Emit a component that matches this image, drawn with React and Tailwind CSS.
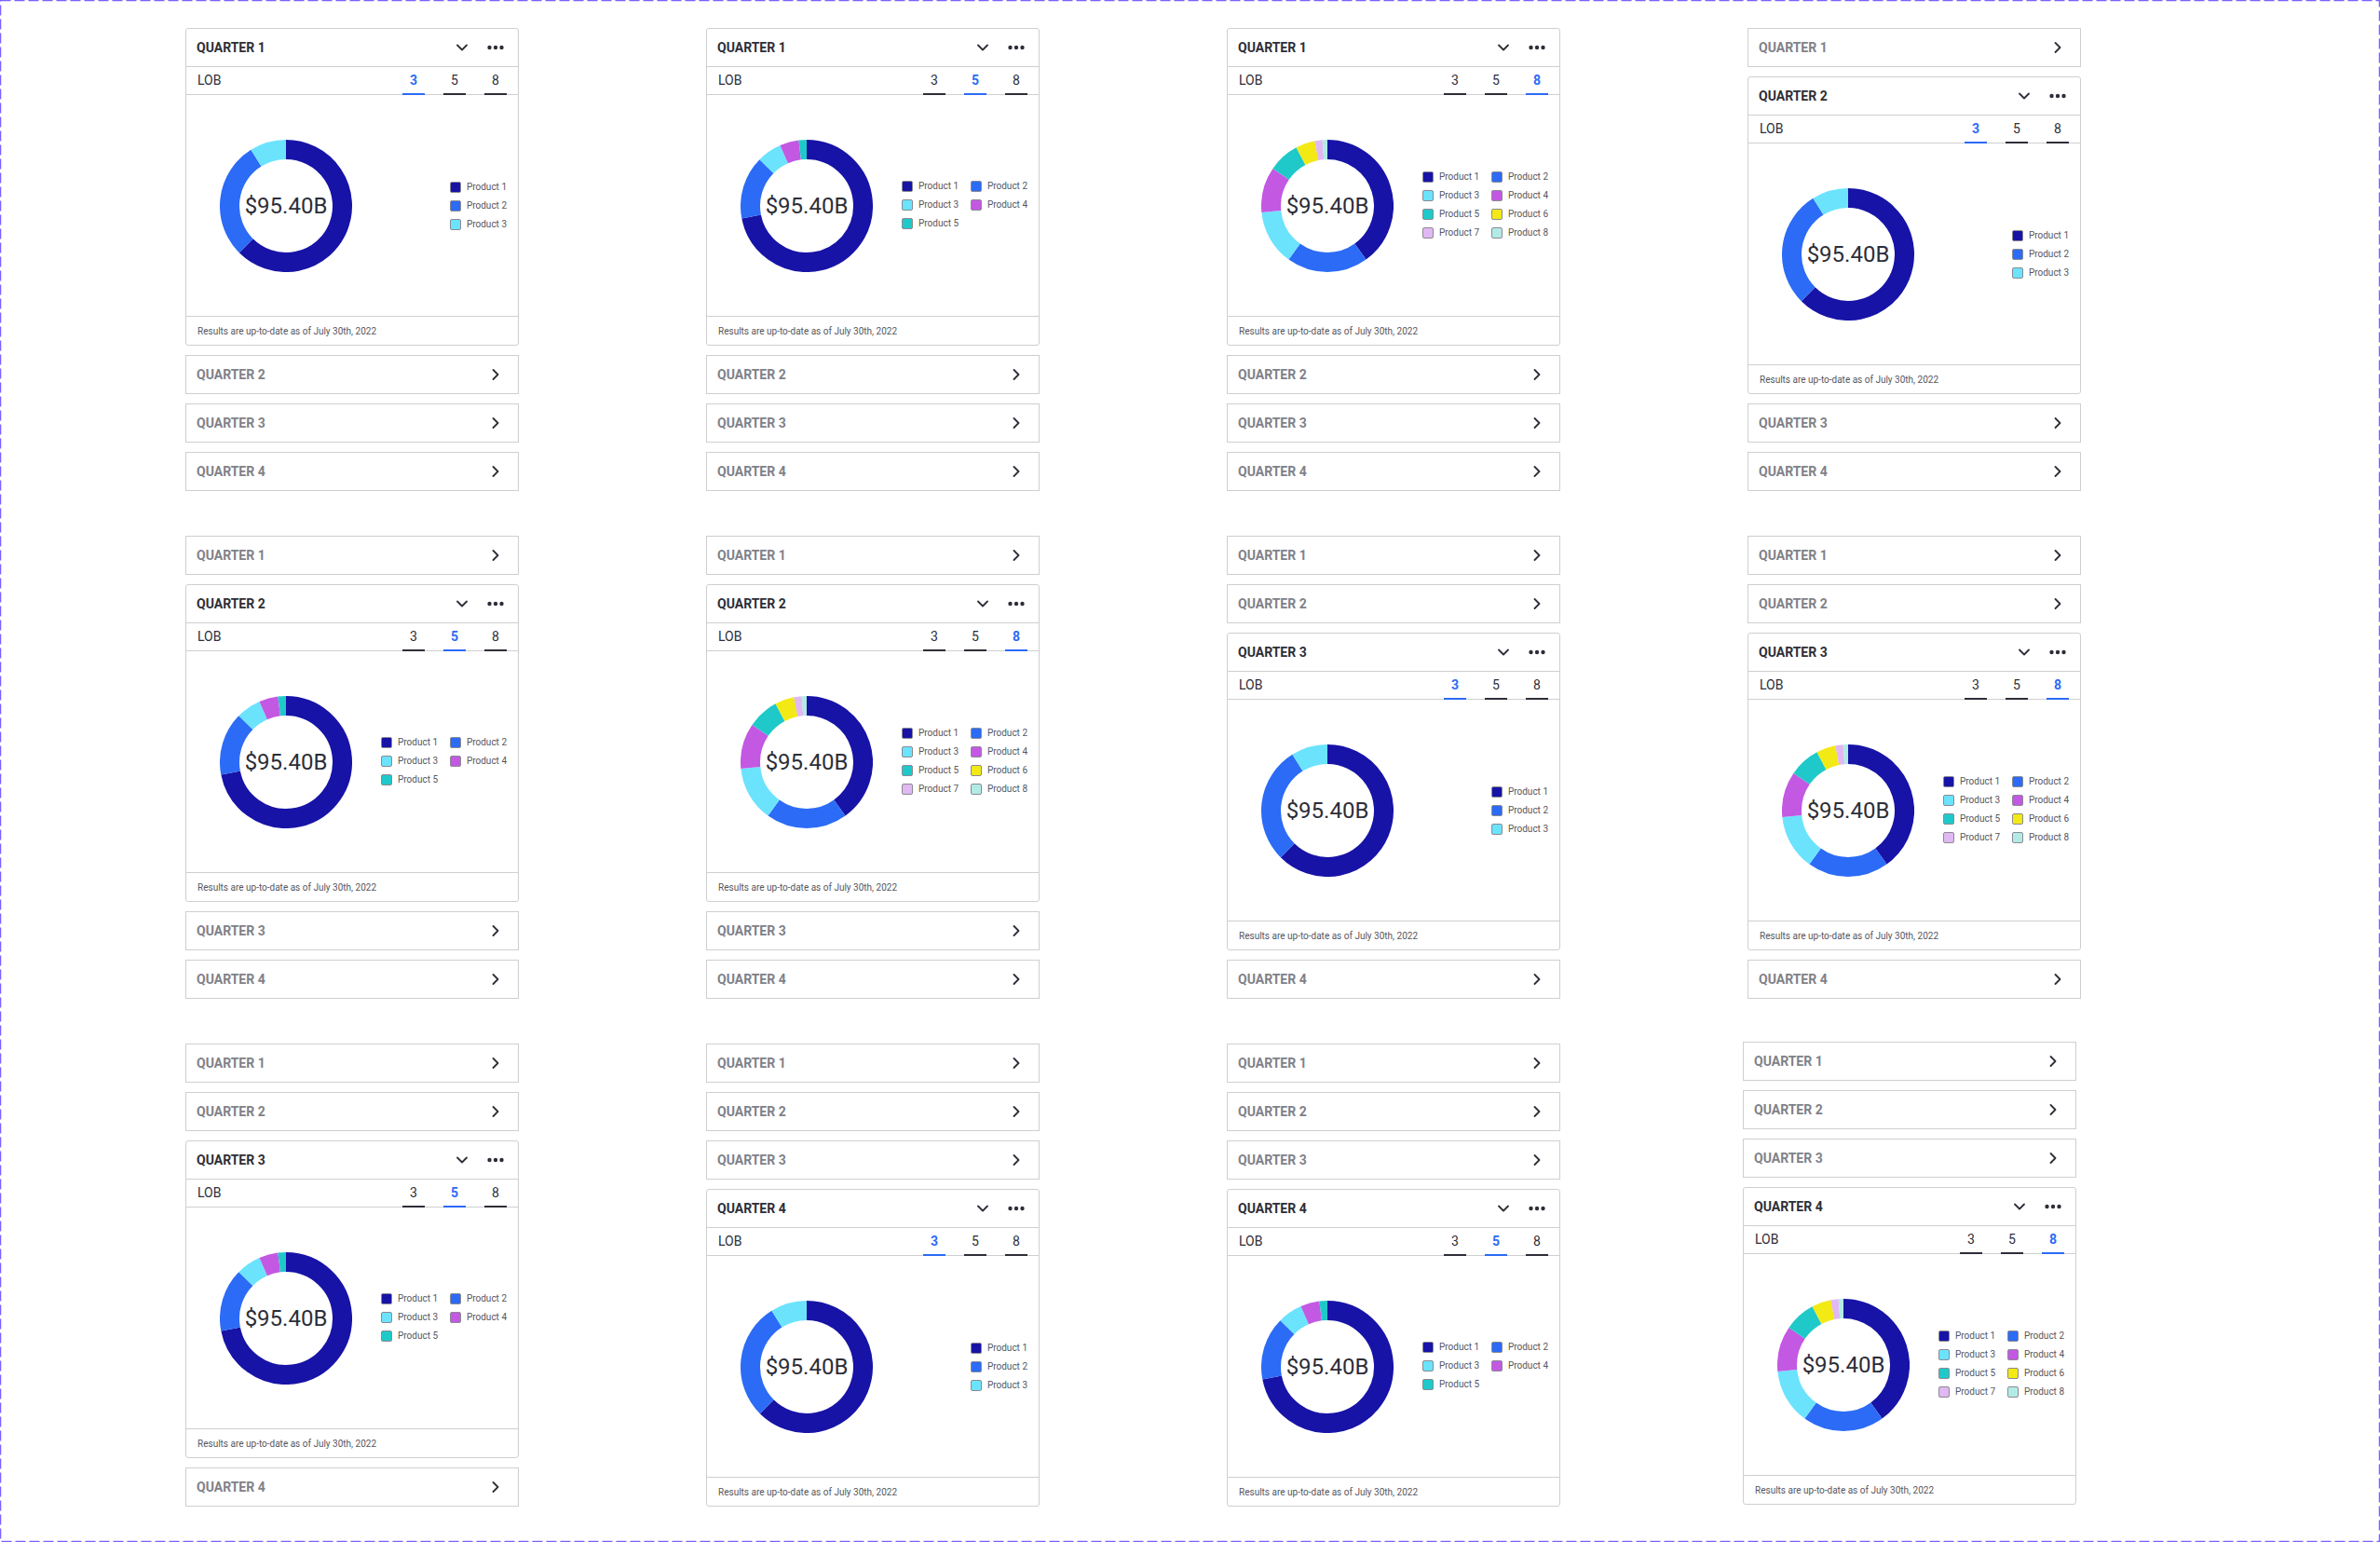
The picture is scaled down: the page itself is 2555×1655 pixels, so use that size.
import { ChevronRight, ChevronDown } from 'lucide-react';

// segment end angles, clockwise from 12 o'clock
const SEGMENTS = {
  3: [
    { color: '#1713a6', end: 225 },
    { color: '#2b6bf6', end: 328 },
    { color: '#6be3fd', end: 360 },
  ],
  5: [
    { color: '#1713a6', end: 259 },
    { color: '#2b6bf6', end: 314.6 },
    { color: '#6be3fd', end: 336.3 },
    { color: '#c358e3', end: 353 },
    { color: '#20c9c9', end: 360 },
  ],
  8: [
    { color: '#1713a6', end: 144.2 },
    { color: '#2b6bf6', end: 215.8 },
    { color: '#6be3fd', end: 264.3 },
    { color: '#c358e3', end: 304.4 },
    { color: '#20c9c9', end: 331.9 },
    { color: '#f3e914', end: 348.8 },
    { color: '#e0b8f2', end: 355.7 },
    { color: '#b2ebe6', end: 360 },
  ],
};

const LEGENDS = {
  3: ['#1713a6', '#2b6bf6', '#6be3fd'],
  5: ['#1713a6', '#2b6bf6', '#6be3fd', '#c358e3', '#20c9c9'],
  8: ['#1713a6', '#2b6bf6', '#6be3fd', '#c358e3', '#20c9c9', '#f3e914', '#e0b8f2', '#b2ebe6'],
};

// order of the frames on the board, left to right
const FRAMES = [
  { quarter: 1, lob: 3 },
  { quarter: 1, lob: 5 },
  { quarter: 1, lob: 8 },
  { quarter: 2, lob: 3 },
  { quarter: 2, lob: 5 },
  { quarter: 2, lob: 8 },
  { quarter: 3, lob: 3 },
  { quarter: 3, lob: 8 },
  { quarter: 3, lob: 5 },
  { quarter: 4, lob: 3 },
  { quarter: 4, lob: 5 },
  { quarter: 4, lob: 8, shifted: true },
];

function arcPoint(angle, radius) {
  const rad = (angle * Math.PI) / 180;
  return [71 + radius * Math.sin(rad), 71 - radius * Math.cos(rad)];
}

function arcPath(start, end) {
  const [x1, y1] = arcPoint(start, 60.5);
  const [x2, y2] = arcPoint(end, 60.5);
  const large = end - start > 180 ? 1 : 0;
  return `M ${x1} ${y1} A 60.5 60.5 0 ${large} 1 ${x2} ${y2}`;
}

function Donut({ lob }) {
  let start = 0;
  return (
    <div className="relative w-[142px] h-[142px] shrink-0">
      <svg width="142" height="142" viewBox="0 0 142 142">
        {SEGMENTS[lob].map((seg) => {
          const d = arcPath(start, seg.end);
          start = seg.end;
          return <path key={seg.color} d={d} fill="none" stroke={seg.color} strokeWidth="21" />;
        })}
      </svg>
      <div className="absolute inset-0 flex items-center justify-center text-[24px] text-[#2d2e38]">$95.40B</div>
    </div>
  );
}

function Legend({ lob }) {
  const items = LEGENDS[lob];
  const single = lob === 3;
  return (
    <div className={single ? 'flex flex-col gap-y-[8px]' : 'grid grid-cols-[74px_61px] gap-y-[8px] mb-[2px]'}>
      {items.map((color, i) => (
        <div key={color} className="flex items-center gap-[6px] h-[12px]">
          <span className="w-[12px] h-[12px] rounded-[2px] border border-[#8a8a92]" style={{ backgroundColor: color }} />
          <span className="text-[10px] leading-[12px] text-[#55565e] whitespace-nowrap">Product {i + 1}</span>
        </div>
      ))}
    </div>
  );
}

function OpenCard({ quarter, lob }) {
  return (
    <div className="h-[341px] flex flex-col bg-white border border-[#cfcfcf] rounded-[3px]">
      <div className="h-[41px] shrink-0 flex items-center justify-between pl-[11px] pr-[15px] border-b border-[#cfcfcf]">
        <span className="text-[14px] font-bold text-[#2d2e38]">QUARTER {quarter}</span>
        <div className="flex items-center gap-[17px]">
          <ChevronDown size={20} strokeWidth={2.2} className="text-[#2d2e38]" />
          <svg width="18" height="6" viewBox="0 0 18 6" fill="#2d2e38">
            <circle cx="2.5" cy="3" r="2.2" />
            <circle cx="9" cy="3" r="2.2" />
            <circle cx="15.5" cy="3" r="2.2" />
          </svg>
        </div>
      </div>
      <div className="relative h-[30px] shrink-0 flex items-center justify-between pl-[12px] pr-[12px] border-b border-[#cfcfcf]">
        <span className="text-[14px] text-[#2d2e38]">LOB</span>
        <div className="flex gap-[20px] self-stretch">
          {[3, 5, 8].map((n) => (
            <div
              key={n}
              className={
                n === lob
                  ? 'w-[24px] -mb-[1px] flex items-center justify-center text-[14px] font-bold text-[#2b6bf6] border-b-2 border-[#2b6bf6]'
                  : 'w-[24px] -mb-[1px] flex items-center justify-center text-[14px] text-[#2d2e38] border-b-2 border-[#2d2e38]'
              }
            >
              {n}
            </div>
          ))}
        </div>
      </div>
      <div className="flex-1 flex items-center justify-between pl-[36px] pr-[12px]">
        <Donut lob={lob} />
        <Legend lob={lob} />
      </div>
      <div className="h-[31px] shrink-0 flex items-center pl-[12px] border-t border-[#cfcfcf] text-[10px] text-[#55565e]">
        Results are up-to-date as of July 30th, 2022
      </div>
    </div>
  );
}

function ClosedRow({ quarter }) {
  return (
    <div className="h-[42px] flex items-center justify-between pl-[11px] pr-[15px] bg-white border border-[#cfcfcf]">
      <span className="text-[14px] font-bold text-[#808189]">QUARTER {quarter}</span>
      <ChevronRight size={20} strokeWidth={2.2} className="text-[#2d2e38] -mr-[1px]" />
    </div>
  );
}

function Frame({ quarter, lob, shifted }) {
  return (
    <div className={shifted ? 'flex flex-col gap-[10px] -ml-[5px] -mt-[2px] mr-[5px]' : 'flex flex-col gap-[10px]'}>
      {[1, 2, 3, 4].map((q) =>
        q === quarter ? <OpenCard key={q} quarter={q} lob={lob} /> : <ClosedRow key={q} quarter={q} />
      )}
    </div>
  );
}

export default function App() {
  return (
    <div className="relative w-[2555px] h-[1655px] bg-white font-['Roboto',sans-serif] pl-[199px] pt-[30px]">
      {/* board outline, dashes are longer than a css dashed border */}
      <svg className="absolute inset-0 pointer-events-none" width="2555" height="1655">
        <rect x="0.5" y="0.5" width="2554" height="1654" fill="none" stroke="#7b61ff" strokeWidth="1.5" strokeDasharray="11 4" />
      </svg>
      <div className="relative grid grid-cols-[repeat(4,358px)] gap-x-[201px] gap-y-[48px] items-start">
        {FRAMES.map((f) => (
          <Frame key={`${f.quarter}-${f.lob}`} {...f} />
        ))}
      </div>
    </div>
  );
}
